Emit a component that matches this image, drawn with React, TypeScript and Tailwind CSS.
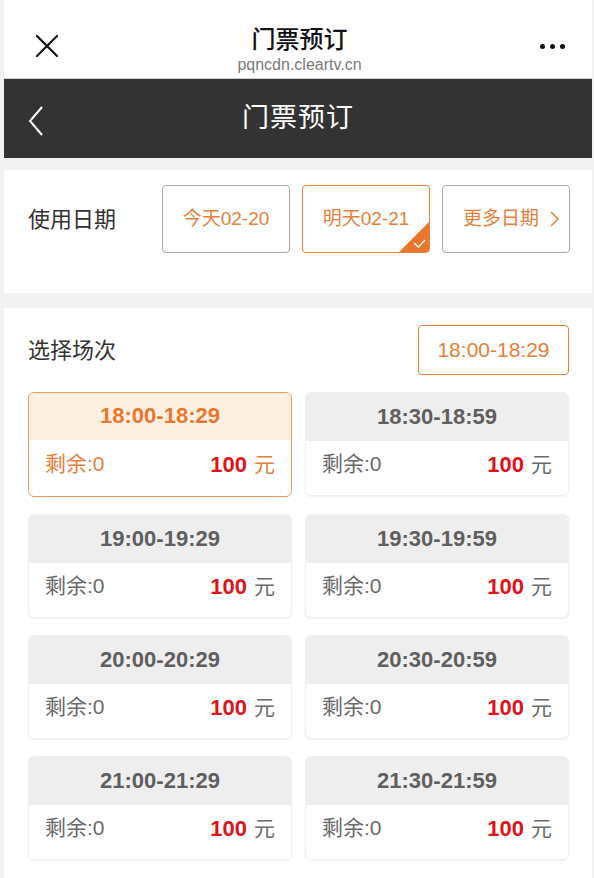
import React from "react";

const font = { fontFamily: '"Liberation Sans", "Noto Sans CJK SC", sans-serif' };

type Slot = { time: string; selected?: boolean };
const slots: Slot[] = [
  { time: "18:00-18:29", selected: true },
  { time: "18:30-18:59" },
  { time: "19:00-19:29" },
  { time: "19:30-19:59" },
  { time: "20:00-20:29" },
  { time: "20:30-20:59" },
  { time: "21:00-21:29" },
  { time: "21:30-21:59" },
];

function SlotCard({ slot }: { slot: Slot }) {
  const sel = !!slot.selected;
  return (
    <div
      className={
        sel
          ? "h-[105px] rounded-[6px] border-[1.5px] border-[#eb9a5c] bg-white overflow-hidden flex flex-col"
          : "h-[104px] rounded-[6px] border border-[#f0f0f0] bg-white overflow-hidden flex flex-col shadow-[0_1px_2px_rgba(0,0,0,0.06)]"
      }
    >
      <div
        className={
          sel
            ? "h-[47px] bg-[#fdefe2] flex items-center justify-center text-[22px] font-bold text-[#e8782c] pb-[2px]"
            : "h-[48px] bg-[#eeeeee] flex items-center justify-center text-[22px] font-bold text-[#5f5f5f] pb-[2px]"
        }
      >
        {slot.time}
      </div>
      <div className="flex-1 flex items-center justify-between pl-[16px] pr-[16px] pb-[8px]">
        <span className={sel ? "text-[21px] text-[#e8803a]" : "text-[21px] text-[#6a6a6a]"}>剩余:0</span>
        <span className="flex items-baseline">
          <span className="text-[22px] font-bold text-[#e0121a]">100</span>
          <span className={sel ? "ml-[7px] text-[21px] text-[#e8803a]" : "ml-[7px] text-[21px] text-[#6a6a6a]"}>元</span>
        </span>
      </div>
    </div>
  );
}

export default function App() {
  return (
    <div className="w-[594px] h-[878px] bg-[#f2f2f2] pl-[4px] pr-[2px] overflow-hidden" style={font}>
      {/* top bar */}
      <div className="h-[79px] bg-white flex items-center justify-between px-[31px] border-b border-[#cfcfcf]">
        <svg width="24" height="24" viewBox="0 0 24 24" className="mt-[14px]">
          <path d="M2 2 L22 22 M22 2 L2 22" stroke="#111" strokeWidth="2.2" strokeLinecap="round" />
        </svg>
        <div className="flex flex-col items-center pt-[22px]">
          <div className="text-[24px] leading-[28px] text-[#111] font-medium">门票预订</div>
          <div className="text-[16px] leading-[20px] text-[#7a7a7a] mt-[1px]">pqncdn.cleartv.cn</div>
        </div>
        <div className="flex gap-[5px] mt-[14px] mr-[-4px]">
          <span className="w-[5px] h-[5px] rounded-full bg-[#111]" />
          <span className="w-[5px] h-[5px] rounded-full bg-[#111]" />
          <span className="w-[5px] h-[5px] rounded-full bg-[#111]" />
        </div>
      </div>
      {/* dark bar */}
      <div className="h-[79px] bg-[#333333] flex items-center relative">
        <svg width="20" height="34" viewBox="0 0 20 34" className="absolute left-[22px] top-[25px]">
          <path d="M16 3 L4 17 L16 31" stroke="#fff" strokeWidth="2" fill="none" />
        </svg>
        <div className="w-full text-center text-[27px] text-white tracking-[1px]">门票预订</div>
      </div>
      <div className="h-[12px]" />
      {/* date section */}
      <div className="bg-white h-[123px] flex items-start pt-[15px] pl-[24px]">
        <div className="h-[68px] flex items-center text-[22px] text-[#333] w-[134px]">使用日期</div>
        <div className="flex gap-[12px]">
          <div className="w-[128px] h-[68px] rounded-[4px] border-[1.5px] border-[#aaaaaa] flex items-center justify-center text-[19px] text-[#e8803a]">
            今天02-20
          </div>
          <div className="relative w-[128px] h-[68px] rounded-[4px] border-[1.5px] border-[#e8803a] flex items-center justify-center text-[19px] text-[#e8803a] overflow-hidden">
            明天02-21
            <svg width="30" height="30" viewBox="0 0 30 30" className="absolute right-0 bottom-0">
              <path d="M30 0 L30 30 L0 30 Z" fill="#ea7630" />
              <path d="M15 21 L19.5 25 L26 18" stroke="#fff" strokeWidth="1.3" fill="none" />
            </svg>
          </div>
          <div className="w-[128px] h-[68px] rounded-[4px] border-[1.5px] border-[#aaaaaa] flex items-center justify-center text-[19px] text-[#e8803a]">
            <span className="ml-[12px]">更多日期</span>
            <svg width="12" height="18" viewBox="0 0 12 18" className="ml-[10px]">
              <path d="M2 2 L9 9 L2 16" stroke="#e8803a" strokeWidth="1.5" fill="none" />
            </svg>
          </div>
        </div>
      </div>
      <div className="h-[15px]" />
      {/* session section */}
      <div className="bg-white h-[600px] pl-[24px] pr-[23px] pt-[17px]">
        <div className="flex items-center justify-between">
          <div className="text-[22px] text-[#333]">选择场次</div>
          <div className="w-[151px] h-[50px] rounded-[4px] border-[1.5px] border-[#e8803a] flex items-center justify-center text-[21px] text-[#e8803a]">
            18:00-18:29
          </div>
        </div>
        <div className="grid grid-cols-2 gap-x-[13px] gap-y-[17px] mt-[17px]">
          {slots.map((s) => (
            <SlotCard key={s.time} slot={s} />
          ))}
        </div>
      </div>
    </div>
  );
}
